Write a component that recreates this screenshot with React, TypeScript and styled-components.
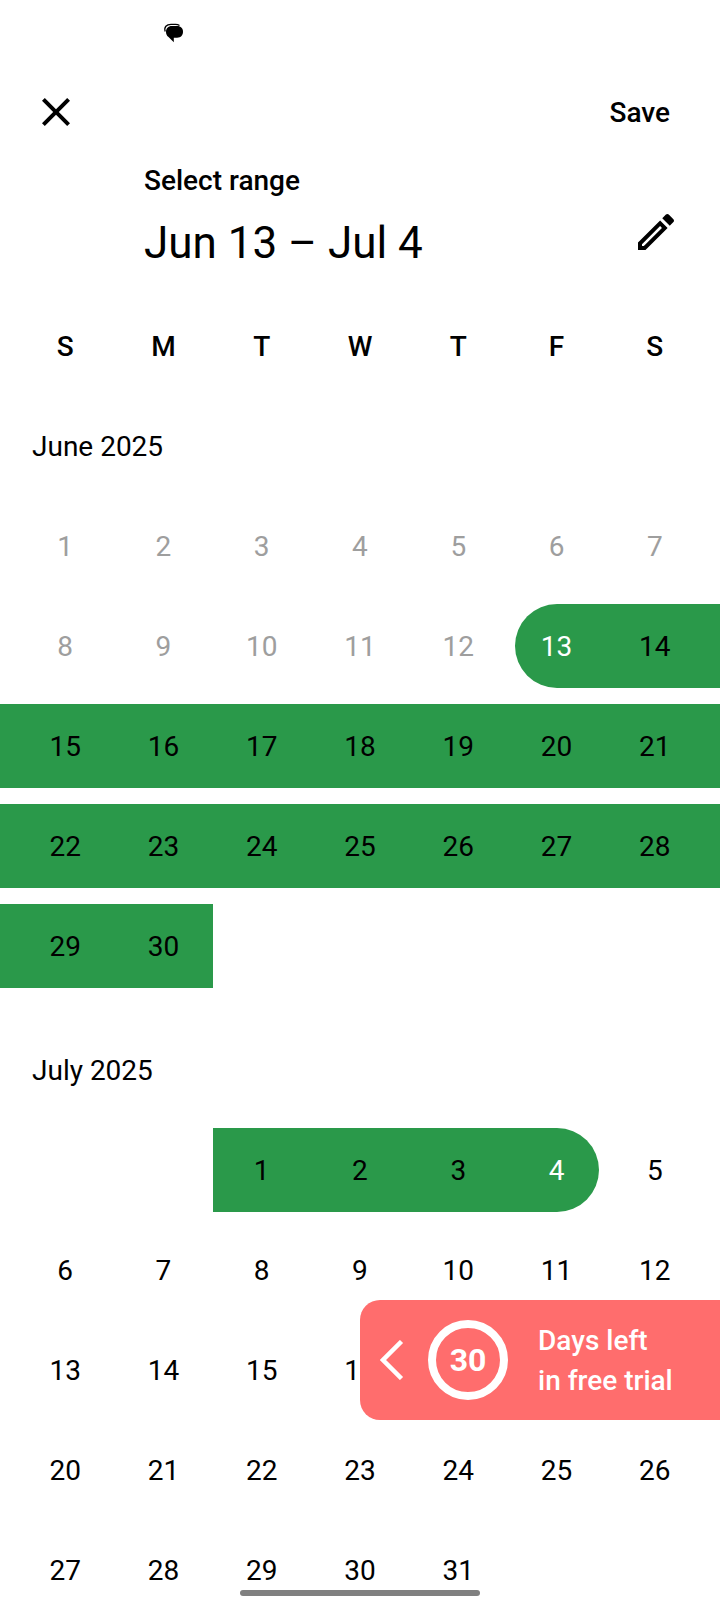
import React from "react";
import styled, { createGlobalStyle } from "styled-components";

const GREEN = "#2a994a";
const CORAL = "#ff6d6d";

const GlobalStyle = createGlobalStyle`
  *, *::before, *::after { box-sizing: border-box; }
  html, body { margin: 0; background: #fff; }
  body {
    font-family: Roboto, "Liberation Sans", sans-serif;
    font-size: 28px;
    line-height: 36px;
    color: #000;
  }
  button {
    font: inherit;
    color: inherit;
    background: none;
    border: 0;
    padding: 0;
    cursor: pointer;
  }
  svg { display: block; }
`;

const Screen = styled.div`
  display: flex;
  flex-direction: column;
  height: 100vh;
  overflow: hidden;
`;

const StatusBar = styled.div`
  flex: none;
  height: 64px;
  padding: 22px 0 0 163px;
`;

const Toolbar = styled.header`
  flex: none;
  display: flex;
  align-items: center;
  justify-content: space-between;
  height: 96px;
  padding: 0 50px 0 32px;
`;

const IconButton = styled.button`
  width: 48px;
  height: 48px;
`;

const SaveButton = styled.button`
  && {
    padding-top: 2px;
    font-weight: 500;
  }
`;

const Heading = styled.section`
  flex: none;
  display: flex;
  justify-content: space-between;
  height: 144px;
  padding: 3px 40px 0 144px;
`;

const HeadingIcon = styled(IconButton)`
  margin-top: 45px;
`;

const Label = styled.p`
  margin: 0;
  font-weight: 500;
`;

const Title = styled.h1`
  margin: 18px 0 0;
  font-size: 44px;
  font-weight: 400;
  line-height: 52px;
`;

const WeekGrid = styled.div`
  flex: none;
  display: grid;
  grid-template-columns: 16px repeat(14, 1fr) 16px;
  grid-template-rows: 84px;
  margin-bottom: 16px;
`;

const Weekday = styled.span<{ $column: number }>`
  grid-area: 1 / ${(p) => p.$column * 2 + 2} / 2 / span 2;
  place-self: center;
  padding-top: 2px;
  font-weight: 500;
`;

const Calendar = styled.main`
  flex: 1;
  min-height: 0;
  overflow: hidden;
`;

const Month = styled.section`
  margin-bottom: 40px;
`;

const MonthName = styled.h2`
  display: flex;
  align-items: center;
  height: 84px;
  margin: 0 0 16px;
  padding: 2px 32px 0;
  font-size: 28px;
  font-weight: 400;
`;

const Band = styled.span<{ $from: number; $to: number; $cap?: "start" | "end" }>`
  grid-area: 1 / ${(p) => p.$from} / 2 / ${(p) => p.$to};
  background: ${GREEN};
  ${(p) => p.$cap === "start" && "margin-left: -42px; border-radius: 42px 0 0 42px;"}
  ${(p) => p.$cap === "end" && "margin-right: -42px; border-radius: 0 42px 42px 0;"}
`;

type Tone = "past" | "normal" | "edge";
const toneColor: Record<Tone, string> = {
  past: "#9e9e9e",
  normal: "#000",
  edge: "#fff",
};

const Day = styled.button<{ $column: number; $tone: Tone }>`
  && {
    grid-area: 1 / ${(p) => p.$column * 2 + 2} / 2 / span 2;
    z-index: 1;
    padding-top: 2px;
    color: ${(p) => toneColor[p.$tone]};
  }
`;

const TrialBanner = styled.button`
  && {
    position: fixed;
    right: 0;
    bottom: 180px;
    z-index: 2;
    display: flex;
    align-items: center;
    width: 50%;
    height: 120px;
    padding-left: 20px;
    border-radius: 20px 0 0 20px;
    background: ${CORAL};
    color: #fff;
    font-weight: 500;
    line-height: 40px;
    text-align: left;
    white-space: nowrap;
  }
`;

const DaysRing = styled.span`
  display: flex;
  flex: none;
  align-items: center;
  justify-content: center;
  width: 80px;
  height: 80px;
  margin: 0 30px 0 24px;
  border: 8px solid #fff;
  border-radius: 50%;
  font-size: 32px;
  font-weight: 700;
`;

const TrialText = styled.span`
  padding-top: 2px;
`;

const HomeIndicator = styled.div`
  position: fixed;
  bottom: 4px;
  left: 50%;
  z-index: 3;
  width: 240px;
  height: 6px;
  margin-left: -120px;
  border-radius: 3px;
  background: #808080;
`;

type Stamp = number;
const stamp = (month: number, day: number): Stamp => month * 100 + day;
const TODAY = stamp(6, 13);
const START = stamp(6, 13);
const END = stamp(7, 4);

interface MonthData {
  name: string;
  month: number;
  offset: number;
  days: number;
}

const months: MonthData[] = [
  { name: "June 2025", month: 6, offset: 0, days: 30 },
  { name: "July 2025", month: 7, offset: 2, days: 31 },
];

function weeksOf({ offset, days }: MonthData) {
  const weeks: { column: number; day: number }[][] = [];
  for (let day = 1; day <= days; day++) {
    const slot = offset + day - 1;
    const week = Math.floor(slot / 7);
    (weeks[week] ??= []).push({ column: slot % 7, day });
  }
  return weeks;
}

function Week({ month, cells }: { month: number; cells: { column: number; day: number }[] }) {
  const selected = cells.filter(({ day }) => {
    const s = stamp(month, day);
    return s >= START && s <= END;
  });
  let band: React.ReactNode = null;
  if (selected.length > 0) {
    const first = selected[0];
    const last = selected[selected.length - 1];
    const isStart = stamp(month, first.day) === START;
    const isEnd = stamp(month, last.day) === END;
    const from = isStart ? first.column * 2 + 3 : first.column === 0 ? 1 : first.column * 2 + 2;
    const to = isEnd ? last.column * 2 + 3 : last.column === 6 ? 17 : last.column * 2 + 4;
    band = <Band $from={from} $to={to} $cap={isStart ? "start" : isEnd ? "end" : undefined} />;
  }
  return (
    <WeekGrid>
      {band}
      {cells.map(({ column, day }) => {
        const s = stamp(month, day);
        const tone: Tone = s === START || s === END ? "edge" : s < TODAY ? "past" : "normal";
        return (
          <Day key={day} type="button" $column={column} $tone={tone} disabled={tone === "past"}>
            {day}
          </Day>
        );
      })}
    </WeekGrid>
  );
}

export default function App() {
  return (
    <>
      <GlobalStyle />
      <Screen>
        <StatusBar>
          <svg width="22" height="22" viewBox="0 0 22 22" aria-hidden="true">
            <path d="M2.200 9.500C.8 5 3.500 2.300 8 2.300h4.500c1.500 0 3 .4 4 1.200" fill="none" stroke="#000" strokeWidth="1.300" />
            <path d="M9 4h5c4 0 6 2.600 6 5.700s-2 6-6 6h-3.200v4.600L5.500 15C3.600 13.600 3 11.600 3 9.700 3 6.500 5 4 9 4z" />
          </svg>
        </StatusBar>
        <Toolbar>
          <IconButton type="button" aria-label="Close">
            <svg width="48" height="48" viewBox="0 0 24 24">
              <path d="M19 6.41 17.59 5 12 10.59 6.41 5 5 6.41 10.59 12 5 17.59 6.41 19 12 13.41 17.59 19 19 17.59 13.41 12z" />
            </svg>
          </IconButton>
          <SaveButton type="button">Save</SaveButton>
        </Toolbar>
        <Heading>
          <div>
            <Label>Select range</Label>
            <Title>Jun 13 – Jul 4</Title>
          </div>
          <HeadingIcon type="button" aria-label="Edit dates">
            <svg width="48" height="48" viewBox="0 0 24 24">
              <path d="M14.06 9.02l.92.92L5.92 19H5v-.92l9.06-9.06M17.66 3c-.25 0-.51.1-.7.29l-1.83 1.83 3.75 3.75 1.83-1.83c.39-.39.39-1.02 0-1.41l-2.34-2.34c-.2-.2-.45-.29-.71-.29zm-3.6 3.19L3 17.25V21h3.75L17.81 9.94l-3.75-3.75z" />
            </svg>
          </HeadingIcon>
        </Heading>
        <WeekGrid>
          {["S", "M", "T", "W", "T", "F", "S"].map((name, column) => (
            <Weekday key={column} $column={column}>
              {name}
            </Weekday>
          ))}
        </WeekGrid>
        <Calendar>
          {months.map((data) => (
            <Month key={data.name}>
              <MonthName>{data.name}</MonthName>
              {weeksOf(data).map((cells, i) => (
                <Week key={i} month={data.month} cells={cells} />
              ))}
            </Month>
          ))}
        </Calendar>
      </Screen>
      <TrialBanner type="button">
        <svg width="24" height="40" viewBox="0 0 24 40" aria-hidden="true">
          <path d="M21.500 1.500 3 20l18.500 18.500" fill="none" stroke="#fff" strokeWidth="4.500" />
        </svg>
        <DaysRing>30</DaysRing>
        <TrialText>
          Days left
          <br />
          in free trial
        </TrialText>
      </TrialBanner>
      <HomeIndicator />
    </>
  );
}
